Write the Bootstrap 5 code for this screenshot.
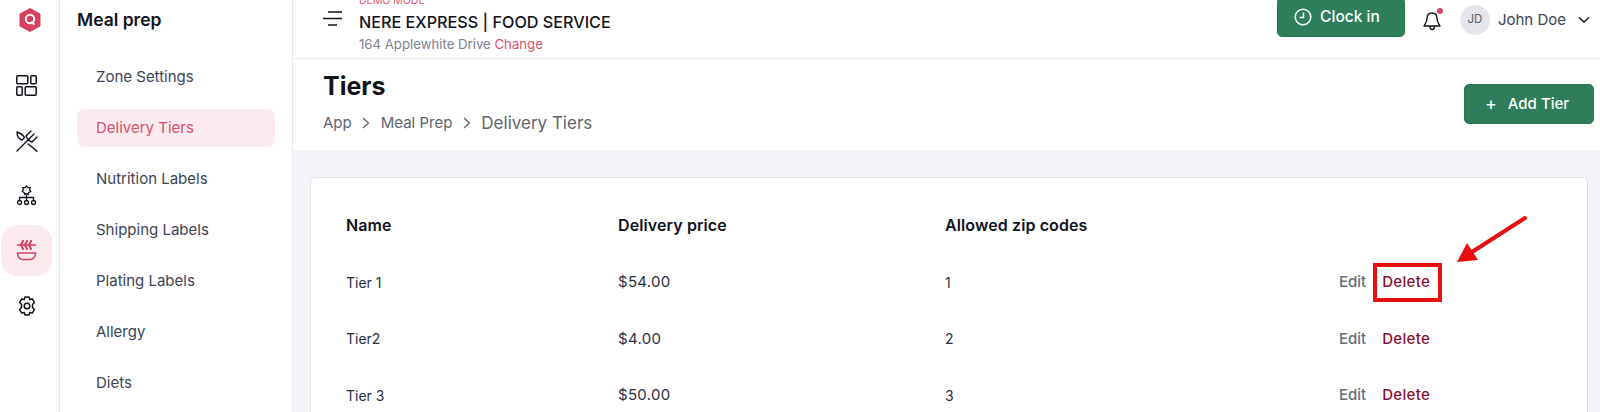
<!DOCTYPE html>
<html lang="en">
<head>
  <meta charset="UTF-8" />
  <meta name="viewport" content="width=device-width, initial-scale=1.0"/>
  <title>Delivery Tiers</title>
  <link href="https://cdn.jsdelivr.net/npm/bootstrap@5.3.0/dist/css/bootstrap.min.css" rel="stylesheet"/>
  <style>
    html, body { height: 412px; overflow: hidden; }
    body { font-family: Inter, "Open Sans", sans-serif; color: #1c2130; background: #fff; }
    .app-shell { height: 412px; position: relative; overflow: hidden; }

    /* Icon rail */
    .icon-rail { width: 60px; flex: none; border-right: 1px solid #e9eaee; padding-top: 6px; }
    .rail-logo { height: 28px; margin-bottom: 26px; }
    .rail-item { width: 51px; height: 51px; margin: 0 0 4px 1px; border-radius: 16px; display: flex; align-items: center; justify-content: center; color: #11131a; }
    .rail-item.is-active { background: #fbeaee; color: #d6405f; }

    /* Section menu */
    .side-menu { width: 233px; flex: none; border-right: 1px solid #e9eaee; padding: 9px 17px 0; }
    .menu-title { font-size: 17.5px; font-weight: 600; color: #11131a; line-height: 22px; margin-bottom: 27px; }
    .menu-link { display: block; height: 38px; line-height: 38px; padding-left: 19px; margin-bottom: 13px; border-radius: 8px; font-size: 15px; color: #3c4354; text-decoration: none; }
    .menu-link.is-active { background: #fbeaee; color: #d9516f; }

    /* Top bar */
    .main-area { min-width: 0; background: #f3f4f8; }
    .top-bar { height: 59px; background: #fff; border-bottom: 1px solid #e9eaee; padding: 0 10px 18px 30px; }
    .menu-toggle { margin-top: -2px; }
    .store-block { margin-left: 16px; margin-top: 6px; }
    .demo-tag { font-size: 10.5px; line-height: 13px; margin-bottom: 2px; color: #e4547a; }
    .store-name { font-size: 16.2px; line-height: 26px; font-weight: 500; color: #11131a; white-space: nowrap; }
    .store-addr { font-size: 13.2px; line-height: 18px; color: #7c8290; }
    .store-addr span { color: #d9516f; }
    .btn-green { background: #2e7d5b; border: 1px solid #27794f; color: #fff; border-radius: 5px; height: 40px; font-size: 15px; font-weight: 500; display: flex; align-items: center; justify-content: center; }
    .btn-green:hover { background: #2e7d5b; color: #fff; }
    .clock-btn { width: 128px; margin-top: -6px; gap: 8px; padding: 0 8px 0 0; font-size: 15.500px; }
    .bell-wrap { margin: -3px 18px 0; position: relative; height: 21px; }
    .bell-dot { position: absolute; top: 0; right: -1px; width: 6px; height: 6px; border-radius: 50%; background: #dc3f5f; }
    .user-avatar { width: 30px; height: 30px; border-radius: 50%; background: #e5e6eb; font-size: 11.5px; color: #535a68; }
    .user-name { font-size: 15px; color: #3c4354; margin: 0 12px 0 8px; }

    /* Page heading */
    .page-head { height: 91px; background: #fff; padding: 12px 6px 0 30px; }
    .page-title { font-size: 25px; font-weight: 700; line-height: 30px; color: #11131a; margin: 0 0 10px; }
    .crumbs { font-size: 15px; color: #5e6472; line-height: 24px; gap: 10.5px; }
    .crumbs .crumb-last { font-size: 17px; }
    .add-btn { width: 130px; margin-top: 13px; gap: 11px; padding: 0 4px 0 0; }
    .add-btn span { font-size: 18px; font-weight: 400; line-height: 1; }

    /* Tiers card */
    .tier-card { margin: 27px 12px 0 17px; background: #fff; border: 0; border-left: 1px solid #e2e3e8; border-top: 1px solid #e2e3e8; border-right: 1px solid #dcdde2; border-radius: 5px; padding: 17px 0 0 35px; }
    .tier-table { margin: 0; table-layout: fixed; }
    .tier-table th, .tier-table td { padding: 0; height: 56.5px; vertical-align: middle; background: transparent; font-size: 14px; color: #2a2f3d; }
    .tier-table th { height: 59px; font-weight: 600; font-size: 16px; letter-spacing: .1px; color: #11131a; }
    .tier-table td.tier-price { font-size: 15px; letter-spacing: .3px; }
    .col-name { width: 272px; }
    .col-price { width: 327px; }
    .row-actions { padding-right: 157px !important; }
    .tier-table td.row-actions { font-size: 15px; }
    .edit-link, .delete-link { font-weight: 500; text-decoration: none; }
    .edit-link { color: #5f6f7e; margin-right: 16px; }
    .delete-link { color: #8a0f35; letter-spacing: .3px; position: relative; }
    .red-box { position: absolute; left: -9px; right: -12px; top: -9px; bottom: -11px; border: 4px solid #e80e0f; }
    .red-arrow { position: absolute; left: 1440px; top: 205px; }
  </style>
</head>
<body>
  <div class="app-shell d-flex">

    <!-- Icon rail -->
    <div class="icon-rail">
      <div class="rail-logo d-flex align-items-center justify-content-center">
        <svg width="22" height="24" viewBox="0 0 22 24"><path d="M11 .5 21 6v12l-10 5.500L1 18V6z" fill="#d6405f" stroke="#d6405f" stroke-linejoin="round"/><circle cx="11" cy="11" r="4.200" fill="none" stroke="#fff" stroke-width="2"/><path d="m12 14 3.500 2.500" stroke="#fff" stroke-width="2"/></svg>
      </div>
      <div class="rail-item">
        <svg width="21" height="21" viewBox="0 0 21 21" fill="none" stroke="currentColor" stroke-width="1.500"><rect x=".8" y=".8" width="11" height="8" rx="1"/><rect x="14.800" y=".8" width="5.400" height="8" rx="1"/><rect x=".8" y="11.800" width="5.400" height="8.400" rx="1"/><rect x="9.200" y="11.800" width="11" height="8.400" rx="1"/></svg>
      </div>
      <div class="rail-item">
        <svg width="22" height="22" viewBox="0 0 22 22" fill="none" stroke="currentColor" stroke-width="1.400" stroke-linecap="round" stroke-linejoin="round"><path d="M1 21 13 9M10 6c1 3 3 5 6 6M10 6l5-5M13 9l5-5M16 12l5-5"/><path d="M1 2c0 4 2 7 5 8l2.500-2.500C7 5 4 3 1 2zM12 14l4 3 5 4.500"/></svg>
      </div>
      <div class="rail-item">
        <svg width="21" height="21" viewBox="0 0 21 21" fill="none" stroke="currentColor" stroke-width="1.300"><path d="m10.500 1 1.500 1.700h2.200l-.5 2.100 1 1.700-1.900 1-.6 2-1.700-1-1.700 1-.6-2-1.900-1 1-1.700-.5-2.100H9z"/><path d="M10.500 9.500V15M3.500 15v-2.500h14V15"/><circle cx="3.500" cy="17.500" r="2"/><circle cx="10.500" cy="17.500" r="2"/><circle cx="17.500" cy="17.500" r="2"/></svg>
      </div>
      <div class="rail-item is-active">
        <svg width="21" height="21" viewBox="0 0 21 21" fill="none" stroke="currentColor" stroke-linecap="round" stroke-linejoin="round"><path d="M1.500 5h18" stroke-width="1.500"/><path d="M7 1 5 5l2 4M11 1 9 5l2 4M15 1l-2 4 2 4" stroke-width="2"/><path d="M1.500 13h18c0 4-2.500 6.500-5 6.500H6.500c-2.500 0-5-2.500-5-6.500z" stroke-width="1.500"/></svg>
      </div>
      <div class="rail-item">
        <svg width="20" height="20" viewBox="0 0 20 20" fill="none" stroke="currentColor" stroke-width="1.500" stroke-linejoin="round"><path d="M8 1h4l.8 2.500 2.500-.6 2 3.500-1.800 2.100v3l1.800 2.100-2 3.500-2.500-.6L12 19H8l-.8-2.500-2.500.6-2-3.500 1.800-2.100v-3L2.700 6.400l2-3.500 2.500.6z"/><circle cx="10" cy="10" r="2.800"/></svg>
      </div>
    </div>

    <!-- Section menu -->
    <div class="side-menu">
      <div class="menu-title">Meal prep</div>
      <a class="menu-link" href="#">Zone Settings</a>
      <a class="menu-link is-active" href="#">Delivery Tiers</a>
      <a class="menu-link" href="#">Nutrition Labels</a>
      <a class="menu-link" href="#">Shipping Labels</a>
      <a class="menu-link" href="#">Plating Labels</a>
      <a class="menu-link" href="#">Allergy</a>
      <a class="menu-link" href="#">Diets</a>
    </div>

    <div class="main-area flex-grow-1">
      <div class="top-bar d-flex align-items-center">
        <svg class="menu-toggle" width="20" height="16" viewBox="0 0 20 16" fill="none" stroke="#11131a" stroke-width="1.400"><path d="M5 1h14M0 7.500h19M5 14h9"/></svg>
        <div class="store-block flex-grow-1">
          <div class="demo-tag">DEMO MODE</div>
          <div class="store-name">NERE EXPRESS | FOOD SERVICE</div>
          <div class="store-addr">164 Applewhite Drive <span>Change</span></div>
        </div>
        <button class="btn btn-green clock-btn" type="button">
          <svg width="18" height="18" viewBox="0 0 18 18" fill="none" stroke="#fff" stroke-width="1.500"><circle cx="9" cy="9" r="7.800"/><path d="M9.500 4.500V9.500H5.500"/></svg>
          Clock in
        </button>
        <div class="bell-wrap">
          <svg width="19" height="21" viewBox="0 0 19 21" fill="none" stroke="#11131a" stroke-width="1.400" stroke-linejoin="round"><path d="M9 2C5.500 2 4 4.500 4 7.500c0 3.500-1.500 5.500-3 7.500h16c-1.500-2-3-4-3-7.500C14 4.500 12.500 2 9 2zM7 15.500c0 4 4.500 4 4.500 0"/></svg>
          <span class="bell-dot"></span>
        </div>
        <div class="user-avatar d-flex align-items-center justify-content-center">JD</div>
        <div class="user-name">John Doe</div>
        <svg width="12" height="8" viewBox="0 0 12 8" fill="none" stroke="#11131a" stroke-width="1.400"><path d="m1 1.500 5 4.500 5-4.500"/></svg>
      </div>

      <div class="page-head d-flex justify-content-between">
        <div>
          <h1 class="page-title">Tiers</h1>
          <div class="crumbs d-flex align-items-center">
            <span>App</span>
            <svg width="8" height="12" viewBox="0 0 8 12" fill="none" stroke="#5e6472" stroke-width="1.300"><path d="m1 1 5.500 5L1 11"/></svg>
            <span>Meal Prep</span>
            <svg width="8" height="12" viewBox="0 0 8 12" fill="none" stroke="#5e6472" stroke-width="1.300"><path d="m1 1 5.500 5L1 11"/></svg>
            <span class="crumb-last">Delivery Tiers</span>
          </div>
        </div>
        <button class="btn btn-green add-btn" type="button"><span>+</span> Add Tier</button>
      </div>

      <div class="card tier-card">
        <table class="table table-borderless tier-table">
          <thead>
            <tr><th class="col-name">Name</th><th class="col-price">Delivery price</th><th>Allowed zip codes</th><th></th></tr>
          </thead>
          <tbody>
            <tr>
              <td>Tier 1</td><td class="tier-price">$54.00</td><td>1</td>
              <td class="row-actions text-end"><a class="edit-link" href="#">Edit</a><a class="delete-link" href="#">Delete<span class="red-box"></span></a></td>
            </tr>
            <tr>
              <td>Tier2</td><td class="tier-price">$4.00</td><td>2</td>
              <td class="row-actions text-end"><a class="edit-link" href="#">Edit</a><a class="delete-link" href="#">Delete</a></td>
            </tr>
            <tr>
              <td>Tier 3</td><td class="tier-price">$50.00</td><td>3</td>
              <td class="row-actions text-end"><a class="edit-link" href="#">Edit</a><a class="delete-link" href="#">Delete</a></td>
            </tr>
          </tbody>
        </table>
      </div>
    </div>

    <!-- Annotation arrow over the table -->
    <svg class="red-arrow" width="100" height="70" viewBox="0 0 100 70"><path d="M85 13 32 47" stroke="#e80e0f" stroke-width="4" stroke-linecap="round"/><path d="M17 57 27 38l11 17z" fill="#e80e0f"/></svg>
  </div>

  <script src="https://cdn.jsdelivr.net/npm/bootstrap@5.3.0/dist/js/bootstrap.bundle.min.js"></script>
</body>
</html>
